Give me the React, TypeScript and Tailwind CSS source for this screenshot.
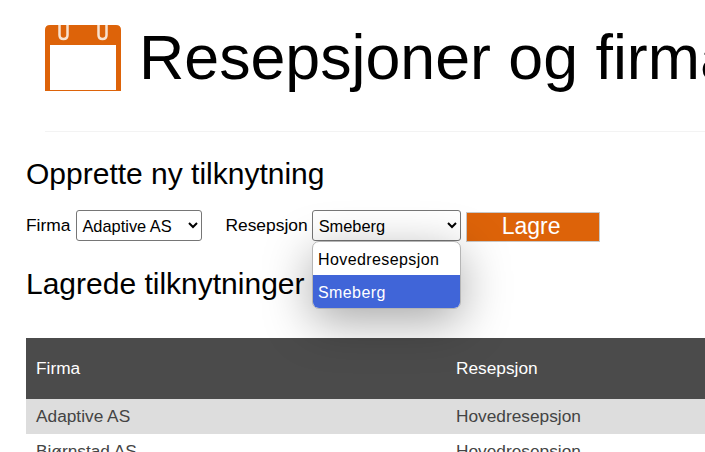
const rows = [
  { firma: 'Adaptive AS', resepsjon: 'Hovedresepsjon' },
  { firma: 'Bjørnstad AS', resepsjon: 'Hovedresepsjon' },
];

function CalendarIcon() {
  return (
    <svg width="76" height="66" viewBox="0 0 76 66" className="shrink-0">
      <path d="M5 0H71Q76 0 76 5V66H0V5Q0 0 5 0Z" fill="#dd6309" />
      <rect x="5" y="20" width="66" height="45" fill="#ffffff" />
      <path d="M14.5 0V10Q14.5 14 18.5 14Q22.5 14 22.5 10V0" fill="none" stroke="#f8e2cf" strokeWidth="2.5" />
      <path d="M53.5 0V10Q53.5 14 57.5 14Q61.5 14 61.5 10V0" fill="none" stroke="#f8e2cf" strokeWidth="2.5" />
    </svg>
  );
}

export default function App() {
  return (
    <div className="relative h-[452px] w-[705px] overflow-hidden bg-white font-['Liberation_Sans',Arial,sans-serif] text-black">
      <div className="ml-[45px] flex h-[132px] items-start gap-[18px] border-b border-[#f3f3f3] pt-[25px]">
        <CalendarIcon />
        <h1 className="mt-[-5px] whitespace-nowrap text-[62.7px] leading-[75px]">Resepsjoner og firmaer</h1>
      </div>

      <div className="pl-[26px]">
        <h2 className="mt-[25px] text-[30px] leading-[34px]">Opprette ny tilknytning</h2>

        <div className="mt-[19px] flex h-[31px] items-center text-[17.4px]">
          <label>Firma</label>
          <select defaultValue="Adaptive AS" className="ml-[6px] h-[31px] w-[126px] rounded-[3px] border border-[#767676] bg-white pl-[1px] text-[16.4px]">
            <option>Adaptive AS</option>
            <option>Bjørnstad AS</option>
          </select>
          <label className="ml-[23px]">Resepsjon</label>
          <select defaultValue="Smeberg" className="ml-[4px] h-[31px] w-[149px] rounded-[3px] border border-[#767676] bg-white pl-[2px] text-[16.4px]">
            <option>Hovedresepsjon</option>
            <option>Smeberg</option>
          </select>
          <button className="ml-[5px] mt-[2px] h-[30px] w-[134px] border border-[#c8c8c8] bg-[#dd6309] pr-[3px] text-[23px] leading-[23px] text-white">Lagre</button>
        </div>

        <h2 className="mt-[26px] text-[30px] leading-[34px]">Lagrede tilknytninger</h2>

        <table className="mt-[37px] w-[900px] table-fixed border-collapse text-left text-[17.3px]">
          <thead>
            <tr className="h-[61px] bg-[#4b4b4b] text-white">
              <th className="w-[420px] px-[10px] font-normal">Firma</th>
              <th className="px-[10px] font-normal">Resepsjon</th>
            </tr>
          </thead>
          <tbody className="text-[#444444]">
            {rows.map((row, idx) => (
              <tr key={row.firma} className={idx % 2 === 0 ? 'h-[35px] bg-[#dddddd]' : 'h-[35px] bg-white'}>
                <td className="px-[10px]">{row.firma}</td>
                <td className="px-[10px]">{row.resepsjon}</td>
              </tr>
            ))}
          </tbody>
        </table>
      </div>

      <div className="absolute left-[312px] top-[241px] w-[149px] overflow-hidden rounded-[7px] border border-[#b5b5b5] bg-white text-[16px] leading-[35px] tracking-[0.4px] shadow-[0_12px_48px_rgba(0,0,0,0.35)]">
        <div className="h-[33px] pl-[5px]">Hovedresepsjon</div>
        <div className="h-[33px] bg-[#4065d8] pl-[5px] text-white">Smeberg</div>
      </div>
    </div>
  );
}
